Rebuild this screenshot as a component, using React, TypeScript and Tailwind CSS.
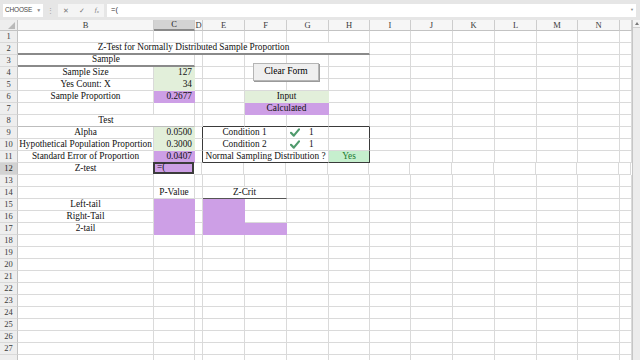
import type { ReactNode } from "react";

// column widths for B..N plus the partial column after N
const COLS = [136, 41, 8, 42, 42, 42, 41, 41, 42, 42, 42, 41, 42, 12];
const LETTERS = ["B", "C", "D", "E", "F", "G", "H", "I", "J", "K", "L", "M", "N", ""];
const ROW_COUNT = 28;

const GRID_R = "border-r border-r-[#dadada]";
const GRID_B = "border-b border-b-[#dadada]";
const BOX_R = "border-r border-r-[#3a3a3a]";
const BOX_B = "border-b border-b-[#3a3a3a]";
const THICK_B = "border-b-2 border-b-[#8a8a8a]";
const NO_R = "border-r border-r-transparent";
const NO_B = "border-b border-b-transparent";

const GREEN = "bg-[#e2efda]";
const PURPLE = "bg-[#cd9fe6]";

type Cell = {
  c: number;
  span?: number;
  text?: ReactNode;
  align?: "l" | "c" | "r";
  bg?: string;
  rb?: string;
  bb?: string;
  extra?: string;
};

const Check = () => (
  <svg width="10" height="9" viewBox="0 0 10 9" className="shrink-0">
    <path d="M1 4.8 L3.8 7.6 L9 1.4" fill="none" stroke="#4f9a6c" strokeWidth="2.2" strokeLinecap="round" strokeLinejoin="round" />
  </svg>
);

const condition = (label: string): Cell[] => [
  { c: 3, span: 2, text: label, align: "c" },
  {
    c: 5,
    text: (
      <span className="flex w-full items-center">
        <span className="ml-[1px]"><Check /></span>
        <span className="ml-[9px]">1</span>
      </span>
    ),
    align: "l",
  },
  { c: 6, rb: BOX_R },
];

const ROWS: Record<number, Cell[]> = {
  2: [{ c: 0, span: 7, text: "Z-Test for Normally Distributed Sample Proportion", align: "c", bb: THICK_B }],
  3: [{ c: 0, span: 2, text: "Sample", align: "c", bb: THICK_B }],
  4: [
    { c: 0, text: "Sample Size", align: "c" },
    { c: 1, text: "127", align: "r", bg: GREEN, rb: NO_R, bb: NO_B },
  ],
  5: [
    { c: 0, text: "Yes Count: X", align: "c" },
    { c: 1, text: "34", align: "r", bg: GREEN, rb: NO_R, bb: NO_B },
  ],
  6: [
    { c: 0, text: "Sample Proportion", align: "c" },
    { c: 1, text: "0.2677", align: "r", bg: PURPLE, rb: NO_R, bb: NO_B },
    { c: 4, span: 2, text: "Input", align: "c", bg: GREEN, rb: NO_R, bb: NO_B },
  ],
  7: [{ c: 4, span: 2, text: "Calculated", align: "c", bg: PURPLE, rb: NO_R, bb: NO_B }],
  8: [
    { c: 0, span: 2, text: "Test", align: "c", bb: "border-b border-b-[#bdbdbd]" },
    { c: 3, bb: BOX_B },
    { c: 4, bb: BOX_B },
    { c: 5, bb: BOX_B },
    { c: 6, bb: BOX_B },
  ],
  9: [
    { c: 0, text: "Alpha", align: "c" },
    { c: 1, text: "0.0500", align: "r", bg: GREEN, rb: NO_R, bb: NO_B },
    { c: 2, rb: BOX_R },
    ...condition("Condition 1"),
  ],
  10: [
    { c: 0, text: "Hypothetical Population Proportion", align: "c" },
    { c: 1, text: "0.3000", align: "r", bg: GREEN, rb: NO_R, bb: NO_B },
    { c: 2, rb: BOX_R },
    ...condition("Condition 2"),
  ],
  11: [
    { c: 0, text: "Standard Error of Proportion", align: "c" },
    { c: 1, text: "0.0407", align: "r", bg: PURPLE, rb: NO_R, bb: NO_B },
    { c: 2, rb: BOX_R },
    { c: 3, span: 3, text: "Normal Sampling Distribution ?", align: "c", bb: BOX_B },
    { c: 6, text: "Yes", align: "c", bg: "bg-[#c6efce]", rb: BOX_R, bb: BOX_B, extra: "text-[#1e7a32]" },
  ],
  12: [
    { c: 0, text: "Z-test", align: "c" },
    {
      c: 1,
      text: "=(",
      align: "l",
      bg: PURPLE,
      rb: "border-r-2 border-r-[#3c3c3c]",
      bb: "border-b-2 border-b-[#3c3c3c]",
      extra: "border-l-2 border-l-[#3c3c3c] border-t-2 border-t-[#3c3c3c] -ml-[1px] -mt-[1px]",
    },
  ],
  14: [
    { c: 1, text: "P-Value", align: "c" },
    { c: 3, span: 2, text: "Z-Crit", align: "c", bb: "border-b border-b-[#555555]" },
  ],
  15: [
    { c: 0, text: "Left-tail", align: "c" },
    { c: 1, bg: PURPLE, rb: NO_R, bb: NO_B },
    { c: 3, bg: PURPLE, rb: NO_R, bb: NO_B },
  ],
  16: [
    { c: 0, text: "Right-Tail", align: "c" },
    { c: 1, bg: PURPLE, rb: NO_R, bb: NO_B },
    { c: 3, bg: PURPLE, rb: NO_R, bb: NO_B },
  ],
  17: [
    { c: 0, text: "2-tail", align: "c" },
    { c: 1, bg: PURPLE, rb: NO_R, bb: NO_B },
    { c: 3, bg: PURPLE, rb: NO_R, bb: NO_B },
    { c: 4, bg: PURPLE, rb: NO_R, bb: NO_B },
  ],
};

function widthOf(c: number, span: number) {
  let w = 0;
  for (let i = c; i < c + span; i++) w += COLS[i];
  return w;
}

function SheetRow({ n }: { n: number }) {
  const defs = ROWS[n] ?? [];
  const out: ReactNode[] = [];
  let i = 0;
  while (i < COLS.length) {
    const d = defs.find((x) => x.c === i);
    const span = d?.span ?? 1;
    const align =
      d?.align === "r" ? "justify-end pr-[2px]" : d?.align === "l" ? "justify-start pl-[2px]" : "justify-center";
    out.push(
      <div
        key={i}
        style={{ width: widthOf(i, span) }}
        className={`flex h-[12px] shrink-0 items-center overflow-visible whitespace-nowrap ${align} ${d?.bg ?? ""} ${
          d?.rb ?? GRID_R
        } ${d?.bb ?? GRID_B} ${d?.extra ?? ""}`}
      >
        {d?.text}
      </div>
    );
    i += span;
  }
  const selected = n === 12;
  return (
    <div className="flex h-[12px]">
      <div
        className={`flex h-[12px] w-[18px] shrink-0 items-center justify-center border-r border-b border-r-[#c3c3c3] border-b-[#d9d9d9] text-[8.5px] ${
          selected ? "bg-[#d2d2d2] text-[#1a1a1a]" : "bg-[#eeeeee] text-[#3a3a3a]"
        }`}
      >
        {n < ROW_COUNT ? n : ""}
      </div>
      {out}
    </div>
  );
}

export default function App() {
  return (
    <div
      className="relative h-[360px] w-[640px] overflow-hidden bg-white text-[9.3px] leading-none text-[#111]"
      style={{ fontFamily: '"Liberation Serif", "Times New Roman", serif' }}
    >
      {/* Formula bar */}
      <div
        className="flex h-[20px] items-center bg-[#e6e6e6] text-[#555]"
        style={{ fontFamily: '"Liberation Sans", Arial, sans-serif' }}
      >
        <div className="ml-[3px] flex h-[13px] w-[40px] items-center justify-between bg-white px-[2px] text-[6.5px] tracking-tight text-[#4a4a4a]">
          <span>CHOOSE</span>
          <span className="text-[5px] text-[#888]">▼</span>
        </div>
        <span className="mx-[4px] text-[7px] text-[#a0a0a0]">⋮</span>
        <div className="flex h-[13px] w-[46px] items-center justify-around bg-[#f4f4f4] text-[7px] text-[#777]">
          <span>✕</span>
          <span>✓</span>
          <span className="italic" style={{ fontFamily: '"Liberation Serif", serif' }}>
            f<sub className="text-[5px]">x</sub>
          </span>
        </div>
        <div className="ml-[3px] mr-[4px] flex h-[13px] flex-1 items-center justify-between bg-white pl-[4px] pr-[2px] text-[7.5px] text-[#333]">
          <span>=(</span>
          <span className="text-[4px] text-[#888]">▼</span>
        </div>
      </div>

      <div className="flex">
        <div className="w-[632px]">
          {/* Column headers */}
          <div className="flex h-[11px] bg-[#f6f6f6]">
            <div className="relative h-[11px] w-[18px] shrink-0 border-r border-b border-r-[#c3c3c3] border-b-[#c3c3c3] bg-[#eeeeee]">
              <svg width="7" height="7" viewBox="0 0 7 7" className="absolute right-[2px] bottom-[1px]">
                <path d="M7 0 L7 7 L0 7 Z" fill="#b9b9b9" />
              </svg>
            </div>
            {LETTERS.map((l, i) => (
              <div
                key={i}
                style={{ width: COLS[i] }}
                className={`flex h-[11px] shrink-0 items-center justify-center border-r border-r-[#cdcdcd] text-[8.5px] ${
                  l === "C"
                    ? "border-b-2 border-b-[#8a8a8a] bg-[#d3d3d3] text-[#1a1a1a]"
                    : "border-b border-b-[#c3c3c3] text-[#3a3a3a]"
                }`}
              >
                {l}
              </div>
            ))}
          </div>
          {Array.from({ length: ROW_COUNT }, (_, k) => (
            <SheetRow key={k} n={k + 1} />
          ))}
        </div>

        {/* Vertical scrollbar */}
        <div className="h-[340px] w-[8px] border-l border-l-[#c6c6c6] bg-[#ececec]">
          <div className="flex h-[8px] items-center justify-center border-b border-b-[#d0d0d0] bg-[#f4f4f4]">
            <svg width="4" height="3" viewBox="0 0 4 3">
              <path d="M0 3 L2 0 L4 3 Z" fill="#7a7a7a" />
            </svg>
          </div>
        </div>
      </div>

      {/* Clear Form button control */}
      <div className="absolute left-[253px] top-[63px] flex h-[18px] w-[66px] items-center justify-center border border-[#b5b5b5] bg-[#efefef] text-[9.5px] text-black shadow-[1px_1px_0_#9a9a9a]">
        Clear Form
      </div>
    </div>
  );
}
